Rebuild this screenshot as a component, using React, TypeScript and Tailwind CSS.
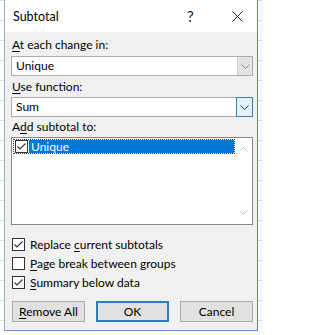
import React from "react";

const font = { fontFamily: 'Lato, "Noto Sans", sans-serif' };

function U({ children }: { children: React.ReactNode }) {
  return <span className="underline underline-offset-[2px] decoration-[1px]">{children}</span>;
}

function Check({ checked }: { checked: boolean }) {
  return (
    <div className="w-[13px] h-[13px] border border-[#333333] bg-white flex items-center justify-center shrink-0">
      {checked && (
        <svg width="11" height="11" viewBox="0 0 11 11">
          <polyline points="1.5,5.5 4,8 9.5,2.5" fill="none" stroke="#333333" strokeWidth="1.1" />
        </svg>
      )}
    </div>
  );
}

function Chevron({ color, up }: { color: string; up?: boolean }) {
  return (
    <svg width="9" height="5" viewBox="0 0 9 5">
      <polyline
        points={up ? "0.5,4.5 4.5,0.5 8.5,4.5" : "0.5,0.5 4.5,4.5 8.5,0.5"}
        fill="none"
        stroke={color}
        strokeWidth="1"
      />
    </svg>
  );
}

export default function App() {
  return (
    <div
      className="w-[262px] h-[335px] overflow-hidden bg-white bg-[linear-gradient(#dcdcdc_1px,transparent_1px)] bg-[length:100%_20px] pl-[4px] text-[12px] text-black"
      style={font}
    >
      <div className="w-[254px] h-[331px] border-l border-r border-b border-l-[#8eb1d8] border-r-[#3b8ad8] border-b-[#5f9bd6] flex flex-col">
        {/* title bar */}
        <div className="h-[32px] bg-white flex items-center pl-[8px] shrink-0">
          <span className="text-[12.5px] leading-[16px] mt-[1px] w-[44px]">Subtotal</span>
          <span className="ml-[130px] text-[15px] leading-[16px] text-[#222]">?</span>
          <svg className="ml-[38px]" width="11" height="11" viewBox="0 0 11 11">
            <path d="M0.5 0.5 L10.5 10.5 M10.5 0.5 L0.5 10.5" stroke="#222" strokeWidth="1" />
          </svg>
        </div>
        {/* body */}
        <div className="flex-1 bg-[#f0f0f0] pl-[6px] pr-[4px] pt-[5px] flex flex-col">
          <div className="leading-[16px] pl-[1px]">
            <U>A</U>t each change in:
          </div>
          <div className="mt-[3px] h-[20px] border border-[#acacac] bg-white flex items-stretch">
            <div className="flex-1 pl-[4px] flex items-center leading-[16px]">Unique</div>
            <div className="w-[15px] bg-[#e3e3e3] border-l border-[#cfcfcf] flex items-center justify-center">
              <Chevron color="#8a8a8a" />
            </div>
          </div>
          <div className="mt-[3px] leading-[16px] pl-[1px]">
            <U>U</U>se function:
          </div>
          <div className="mt-[2px] h-[20px] border border-[#acacac] bg-white flex items-stretch">
            <div className="flex-1 pl-[4px] flex items-center leading-[16px]">Sum</div>
            <div className="w-[17px] -my-[1px] -mr-[1px] bg-[#e5f1fb] border border-[#3c7fb1] flex items-center justify-center">
              <Chevron color="#333333" />
            </div>
          </div>
          <div className="mt-[2px] leading-[16px] pl-[1px]">
            A<U>d</U>d subtotal to:
          </div>
          <div className="mt-[2px] h-[88px] border border-[#828790] bg-white flex">
            <div className="flex-1 pt-[1px] pl-[1px]">
              <div className="h-[15px] border border-dotted border-[#333] flex items-center">
                <div className="pl-[1px]">
                  <Check checked />
                </div>
                <div className="ml-[1px] flex-1 h-[13px] bg-[#0078d7] text-white pl-[2px] flex items-center leading-[13px]">
                  Unique
                </div>
              </div>
            </div>
            <div className="w-[17px] flex flex-col items-center justify-between py-[9px]">
              <Chevron color="#c4c4c4" up />
              <Chevron color="#c4c4c4" />
            </div>
          </div>
          <div className="mt-[10px] flex flex-col">
            <div className="h-[19px] flex items-center pl-[1px]">
              <Check checked />
              <span className="ml-[5px] leading-[16px]">
                Replace <U>c</U>urrent subtotals
              </span>
            </div>
            <div className="h-[19px] flex items-center pl-[1px]">
              <Check checked={false} />
              <span className="ml-[5px] leading-[16px]">
                <U>P</U>age break between groups
              </span>
            </div>
            <div className="h-[19px] flex items-center pl-[1px]">
              <Check checked />
              <span className="ml-[5px] leading-[16px]">
                <U>S</U>ummary below data
              </span>
            </div>
          </div>
          <div className="mt-[9px] flex gap-[11px] pl-[1px]">
            <div className="w-[73px] h-[21px] bg-[#e1e1e1] border border-[#adadad] flex items-center justify-center leading-[16px]">
              <span>
                <U>R</U>emove All
              </span>
            </div>
            <div className="w-[73px] h-[21px] bg-[#e1e1e1] border-2 border-[#2f7bbf] flex items-center justify-center leading-[16px]">
              OK
            </div>
            <div className="w-[73px] h-[21px] bg-[#e1e1e1] border border-[#adadad] flex items-center justify-center leading-[16px]">
              Cancel
            </div>
          </div>
        </div>
      </div>
    </div>
  );
}
